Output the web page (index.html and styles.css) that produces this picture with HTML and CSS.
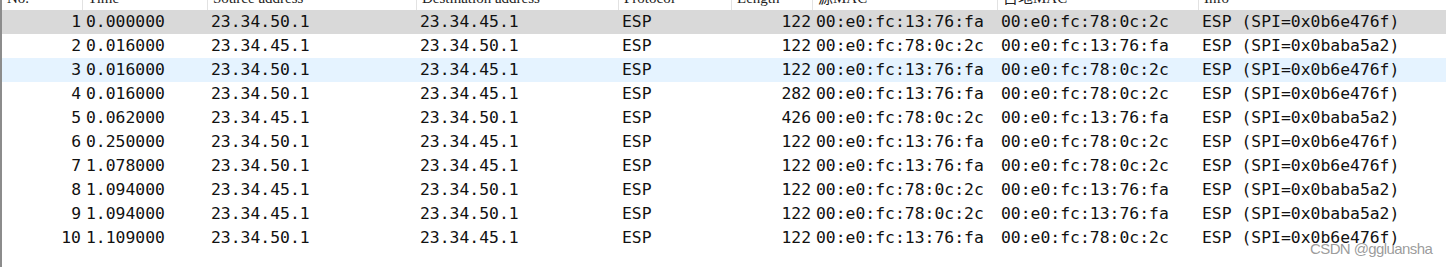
FILE: index.html
```html
<!DOCTYPE html>
<html lang="zh-CN">
<head>
    <meta charset="UTF-8">
    <meta name="viewport" content="width=device-width, initial-scale=1.0">
    <title>ESP 报文列表</title>
    <link rel="stylesheet" href="styles.css">
</head>
<body>
    <div class="packet-list">
        <div class="row header">
            <div class="cell">No.</div>
            <div class="cell">Time</div>
            <div class="cell">Source address</div>
            <div class="cell">Destination address</div>
            <div class="cell">Protocol</div>
            <div class="cell">Length</div>
            <div class="cell">源MAC</div>
            <div class="cell">目地MAC</div>
            <div class="cell">Info</div>
        </div>

        <div class="row selected">
            <div class="cell num">1</div>
            <div class="cell">0.000000</div>
            <div class="cell">23.34.50.1</div>
            <div class="cell">23.34.45.1</div>
            <div class="cell">ESP</div>
            <div class="cell num">122</div>
            <div class="cell">00:e0:fc:13:76:fa</div>
            <div class="cell">00:e0:fc:78:0c:2c</div>
            <div class="cell">ESP (SPI=0x0b6e476f)</div>
        </div>
        <div class="row">
            <div class="cell num">2</div>
            <div class="cell">0.016000</div>
            <div class="cell">23.34.45.1</div>
            <div class="cell">23.34.50.1</div>
            <div class="cell">ESP</div>
            <div class="cell num">122</div>
            <div class="cell">00:e0:fc:78:0c:2c</div>
            <div class="cell">00:e0:fc:13:76:fa</div>
            <div class="cell">ESP (SPI=0x0baba5a2)</div>
        </div>
        <div class="row hover">
            <div class="cell num">3</div>
            <div class="cell">0.016000</div>
            <div class="cell">23.34.50.1</div>
            <div class="cell">23.34.45.1</div>
            <div class="cell">ESP</div>
            <div class="cell num">122</div>
            <div class="cell">00:e0:fc:13:76:fa</div>
            <div class="cell">00:e0:fc:78:0c:2c</div>
            <div class="cell">ESP (SPI=0x0b6e476f)</div>
        </div>
        <div class="row">
            <div class="cell num">4</div>
            <div class="cell">0.016000</div>
            <div class="cell">23.34.50.1</div>
            <div class="cell">23.34.45.1</div>
            <div class="cell">ESP</div>
            <div class="cell num">282</div>
            <div class="cell">00:e0:fc:13:76:fa</div>
            <div class="cell">00:e0:fc:78:0c:2c</div>
            <div class="cell">ESP (SPI=0x0b6e476f)</div>
        </div>
        <div class="row">
            <div class="cell num">5</div>
            <div class="cell">0.062000</div>
            <div class="cell">23.34.45.1</div>
            <div class="cell">23.34.50.1</div>
            <div class="cell">ESP</div>
            <div class="cell num">426</div>
            <div class="cell">00:e0:fc:78:0c:2c</div>
            <div class="cell">00:e0:fc:13:76:fa</div>
            <div class="cell">ESP (SPI=0x0baba5a2)</div>
        </div>
        <div class="row">
            <div class="cell num">6</div>
            <div class="cell">0.250000</div>
            <div class="cell">23.34.50.1</div>
            <div class="cell">23.34.45.1</div>
            <div class="cell">ESP</div>
            <div class="cell num">122</div>
            <div class="cell">00:e0:fc:13:76:fa</div>
            <div class="cell">00:e0:fc:78:0c:2c</div>
            <div class="cell">ESP (SPI=0x0b6e476f)</div>
        </div>
        <div class="row">
            <div class="cell num">7</div>
            <div class="cell">1.078000</div>
            <div class="cell">23.34.50.1</div>
            <div class="cell">23.34.45.1</div>
            <div class="cell">ESP</div>
            <div class="cell num">122</div>
            <div class="cell">00:e0:fc:13:76:fa</div>
            <div class="cell">00:e0:fc:78:0c:2c</div>
            <div class="cell">ESP (SPI=0x0b6e476f)</div>
        </div>
        <div class="row">
            <div class="cell num">8</div>
            <div class="cell">1.094000</div>
            <div class="cell">23.34.45.1</div>
            <div class="cell">23.34.50.1</div>
            <div class="cell">ESP</div>
            <div class="cell num">122</div>
            <div class="cell">00:e0:fc:78:0c:2c</div>
            <div class="cell">00:e0:fc:13:76:fa</div>
            <div class="cell">ESP (SPI=0x0baba5a2)</div>
        </div>
        <div class="row">
            <div class="cell num">9</div>
            <div class="cell">1.094000</div>
            <div class="cell">23.34.45.1</div>
            <div class="cell">23.34.50.1</div>
            <div class="cell">ESP</div>
            <div class="cell num">122</div>
            <div class="cell">00:e0:fc:78:0c:2c</div>
            <div class="cell">00:e0:fc:13:76:fa</div>
            <div class="cell">ESP (SPI=0x0baba5a2)</div>
        </div>
        <div class="row">
            <div class="cell num">10</div>
            <div class="cell">1.109000</div>
            <div class="cell">23.34.50.1</div>
            <div class="cell">23.34.45.1</div>
            <div class="cell">ESP</div>
            <div class="cell num">122</div>
            <div class="cell">00:e0:fc:13:76:fa</div>
            <div class="cell">00:e0:fc:78:0c:2c</div>
            <div class="cell">ESP (SPI=0x0b6e476f)</div>
        </div>

        <div class="watermark">CSDN @ggluansha</div>
    </div>
</body>
</html>
```

FILE: styles.css
```css
html, body {
    margin: 0;
    height: 267px;
    overflow: hidden;
    background-color: #ffffff;
}

.packet-list {
    display: flow-root;
    position: relative;
    width: 1444px;
    height: 267px;
    border-left: 2px solid #8c8c8c;
    font-family: "DejaVu Sans Mono", "Liberation Mono", monospace;
    font-size: 16.4px;
    color: #111;
}

.row {
    display: grid;
    grid-template-columns: 80px 125px 209px 202px 113px 81px 185px 201px 1fr;
    height: 24px;
    line-height: 24px;
}

.cell {
    padding: 0 4px;
    white-space: nowrap;
    overflow: hidden;
}

.cell.num {
    text-align: right;
    padding: 0 1px 0 0;
}

/* only the lower part of the column header is visible */
.header {
    margin-top: -14px;
    font-family: "Liberation Serif", "Noto Sans CJK SC", serif;
    font-size: 15px;
    color: #222;
}

.header .cell {
    padding: 0 5px;
}

.header .cell + .cell {
    border-left: 1px solid #e2e2e2;
}

.selected {
    background-color: #d9d9d9;
}

.hover {
    background-color: #e5f3ff;
}

.watermark {
    position: absolute;
    top: 240px;
    left: 1308px;
    line-height: 18px;
    font-family: "Liberation Sans", Arial, sans-serif;
    font-size: 15px;
    letter-spacing: -0.6px;
    color: rgba(130, 130, 130, 0.8);
}
```
